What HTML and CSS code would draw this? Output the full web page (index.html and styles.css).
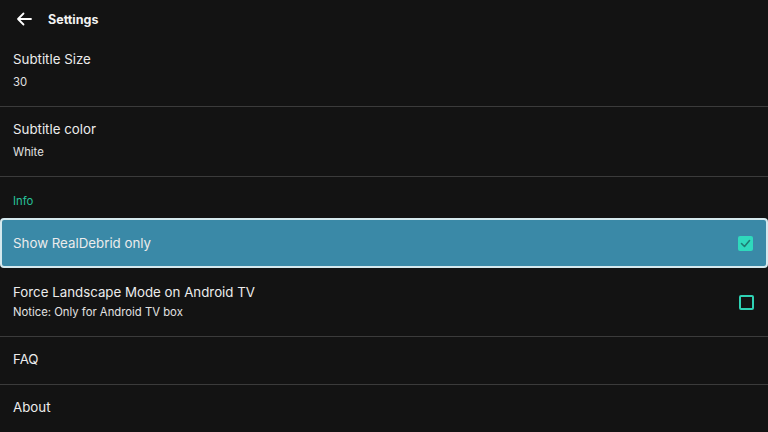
FILE: index.html
```html
<!DOCTYPE html>
<html>
<head>
<meta charset="utf-8">
<link rel="stylesheet" href="styles.css">
</head>
<body>
<div class="app">
  <header class="topbar">
    <svg class="back" width="16" height="14" viewBox="0 0 16 14"><path d="M15 7H2M7.5 1.5L2 7l5.5 5.5" fill="none" stroke="#fff" stroke-width="1.8" stroke-linecap="round" stroke-linejoin="round"/></svg>
    <span class="title">Settings</span>
  </header>
  <div class="row two">
    <div class="label">Subtitle Size</div>
    <div class="sub">30</div>
  </div>
  <div class="row two">
    <div class="label">Subtitle color</div>
    <div class="sub">White</div>
  </div>
  <div class="section">Info</div>
  <div class="row check focused">
    <div class="label">Show RealDebrid only</div>
    <span class="box checked"><svg width="11" height="9" viewBox="0 0 11 9"><path d="M1.5 4.5l3 3 5-6" fill="none" stroke="#1f7d74" stroke-width="1.6" stroke-linecap="round" stroke-linejoin="round"/></svg></span>
  </div>
  <div class="row check two-check">
    <div class="texts">
      <div class="label">Force Landscape Mode on Android TV</div>
      <div class="sub tight">Notice: Only for Android TV box</div>
    </div>
    <span class="box"></span>
  </div>
  <div class="row one">
    <div class="label">FAQ</div>
  </div>
  <div class="row one last">
    <div class="label">About</div>
  </div>
</div>
</body>
</html>
```

FILE: styles.css
```css
* { box-sizing: border-box; }
html, body { margin: 0; padding: 0; background: #131313; }
body { width: 768px; height: 432px; overflow: hidden; font-family: "Inter", "Open Sans", sans-serif; color: #ececec; }
.app { display: flex; flex-direction: column; }
.topbar { height: 37px; display: flex; align-items: center; padding-left: 16px; gap: 16px; padding-top: 1px; }
.topbar .title { font-size: 12.5px; font-weight: 700; color: #f2f2f2; }
.back { display: block; }
.row { padding: 0 13px; border-bottom: 1px solid #3b3b3b; }
.row.two { padding-top: 12px; padding-bottom: 14px; }
.row.one { padding-top: 12px; padding-bottom: 15px; }
.row.last { border-bottom: none; }
.label { font-size: 13.3px; line-height: 20px; color: #ececec; }
.sub { font-size: 11.3px; line-height: 20px; margin-top: 3px; color: #e2e2e2; }
.sub.tight { margin-top: 0; }
.section { font-size: 11.3px; line-height: 20px; color: #27c29a; padding: 14px 13px 7px; }
.check { display: flex; align-items: center; justify-content: space-between; padding-right: 14px; }
.focused { height: 50px; background: #3a89a7; border: 2px solid #d5e9ee; border-radius: 4px; padding-left: 11px; padding-right: 13px; }
.two-check { padding-top: 14px; padding-bottom: 14px; }
.box { width: 15px; height: 15px; border: 2px solid #2fd1b4; border-radius: 2px; display: flex; align-items: center; justify-content: center; }
.box.checked { background: #2fd9bc; border-color: #2fd9bc; }
```
